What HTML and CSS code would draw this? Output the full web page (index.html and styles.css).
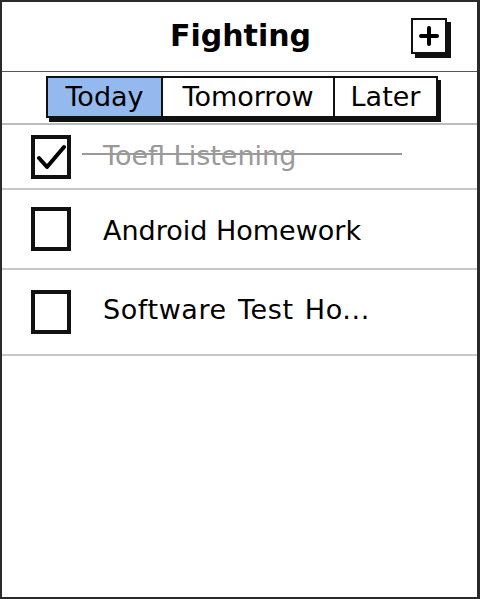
FILE: index.html
```html
<!DOCTYPE html>
<html>
<head>
<meta charset="utf-8">
<link rel="stylesheet" href="styles.css">
</head>
<body>
<div class="frame">
  <header class="header">
    <span></span>
    <h1 class="title">Fighting</h1>
    <button class="add-btn" aria-label="Add">
      <svg width="20" height="20" viewBox="0 0 20 20"><path d="M10 2 V18 M2 10 H18" stroke="#000" stroke-width="4" stroke-linecap="round" fill="none"/></svg>
    </button>
  </header>
  <nav class="tabs-bar">
    <div class="tabs">
      <div class="tab tab-active">Today</div>
      <div class="tab tab-mid">Tomorrow</div>
      <div class="tab tab-last">Later</div>
    </div>
  </nav>
  <ul class="list">
    <li class="row row-1">
      <span class="check">
        <svg width="30" height="30" viewBox="0 0 30 30"><path d="M3 16 L11 25 L28 5" stroke="#000" stroke-width="4" stroke-linecap="round" stroke-linejoin="round" fill="none"/></svg>
      </span>
      <span class="label done">Toefl Listening</span>
      <span class="strike"></span>
    </li>
    <li class="row row-2">
      <span class="check"></span>
      <span class="label label-low">Android Homework</span>
    </li>
    <li class="row row-3">
      <span class="check"></span>
      <span class="label label-wide">Software Test Ho...</span>
    </li>
  </ul>
</div>
</body>
</html>
```
FILE: styles.css
```css
html, body {
  margin: 0;
  padding: 0;
  background: #fff;
}
.frame {
  width: 480px;
  height: 599px;
  box-sizing: border-box;
  border: 2px solid #2a2a2a;
  border-right-width: 3px;
  display: flex;
  flex-direction: column;
  font-family: "DejaVu Sans", sans-serif;
  color: #000;
  overflow: hidden;
}
.header {
  height: 69px;
  flex: none;
  border-bottom: 1px solid #555;
  display: grid;
  grid-template-columns: 1fr auto 1fr;
  align-items: center;
}
.title {
  margin: 0;
  font-size: 30px;
  font-weight: 700;
  line-height: 1;
  padding-bottom: 2px;
  padding-left: 2px;
}
.add-btn {
  justify-self: end;
  margin-right: 30px;
  margin-top: -2px;
  width: 36px;
  height: 36px;
  box-sizing: border-box;
  border: 2px solid #111;
  background: #fff;
  box-shadow: 4px 4px 0 #111;
  padding: 0;
  display: flex;
  align-items: center;
  justify-content: center;
}
.tabs-bar {
  height: 53px;
  flex: none;
  border-bottom: 2px solid #bdbdbd;
  display: flex;
  align-items: flex-start;
  padding-left: 44px;
  padding-top: 4px;
  box-sizing: border-box;
}
.tabs {
  display: flex;
  border: 2px solid #111;
  box-shadow: 3px 4px 0 #111;
  height: 42px;
  box-sizing: border-box;
}
.tab {
  font-size: 27px;
  line-height: 38px;
  text-align: center;
  box-sizing: border-box;
}
.tab-active {
  width: 115px;
  background: #94b9ef;
  border-right: 2px solid #111;
}
.tab-mid {
  width: 172px;
  border-right: 2px solid #111;
}
.tab-last {
  width: 101px;
}
.list {
  list-style: none;
  margin: 0;
  padding: 0;
}
.row {
  position: relative;
  display: flex;
  align-items: center;
  border-bottom: 2px solid #c8c8c8;
  box-sizing: border-box;
  padding-left: 29px;
}
.row-1 { height: 65px; }
.row-2 { height: 80px; }
.row-3 { height: 86px; }
.check {
  width: 40px;
  height: 44px;
  box-sizing: border-box;
  border: 4px solid #111;
  flex: none;
  display: flex;
  align-items: center;
  justify-content: center;
}
.label {
  margin-left: 32px;
  font-size: 27px;
  line-height: 1;
  padding-bottom: 2px;
}
.label-low {
  padding-bottom: 0;
  padding-top: 2px;
}
.label-wide {
  word-spacing: 2px;
  letter-spacing: 0.6px;
  padding-bottom: 5px;
}
.done {
  color: #999;
}
.strike {
  position: absolute;
  left: 80px;
  width: 320px;
  top: 28px;
  height: 2px;
  background: #9a9a9a;
}
```
